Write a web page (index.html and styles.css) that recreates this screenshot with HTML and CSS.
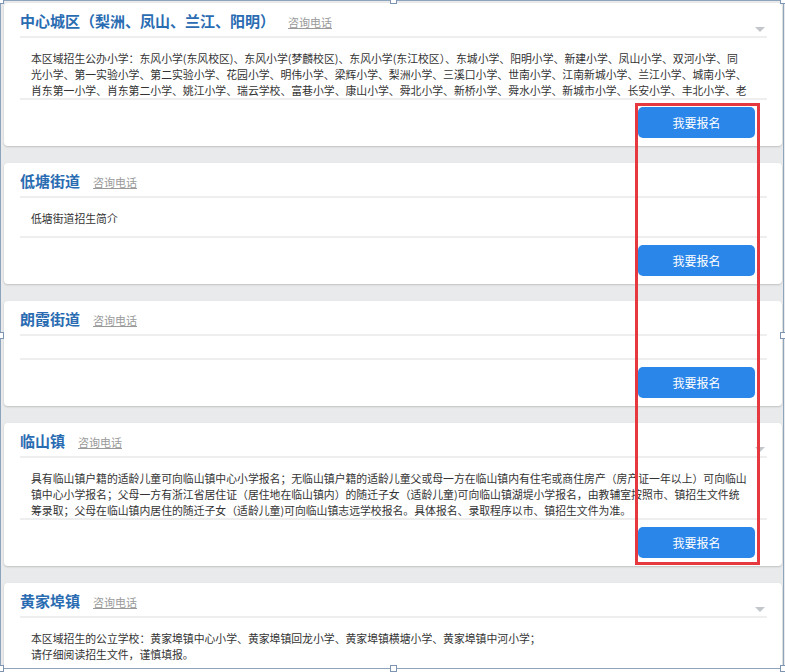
FILE: index.html
```html
<!DOCTYPE html>
<html lang="zh-CN">
<head>
<meta charset="utf-8">
<title>招生区域</title>
<link rel="stylesheet" href="styles.css">
</head>
<body>
<div class="page">
  <section class="card">
    <div class="card-head">
      <h2 class="title">中心城区（梨洲、凤山、兰江、阳明）</h2>
      <a class="phone" href="#">咨询电话</a>
      <span class="caret"></span>
    </div>
    <div class="card-body">本区域招生公办小学：东风小学(东风校区)、东风小学(梦麟校区)、东风小学(东江校区）、东城小学、阳明小学、新建小学、凤山小学、双河小学、同<br>光小学、第一实验小学、第二实验小学、花园小学、明伟小学、梁辉小学、梨洲小学、三溪口小学、世南小学、江南新城小学、兰江小学、城南小学、<br>肖东第一小学、肖东第二小学、姚江小学、瑞云学校、富巷小学、康山小学、舜北小学、新桥小学、舜水小学、新城市小学、长安小学、丰北小学、老</div>
    <div class="card-foot"><button class="btn">我要报名</button></div>
  </section>

  <section class="card">
    <div class="card-head">
      <h2 class="title">低塘街道</h2>
      <a class="phone" href="#">咨询电话</a>
    </div>
    <div class="card-body">低塘街道招生简介</div>
    <div class="card-foot"><button class="btn">我要报名</button></div>
  </section>

  <section class="card">
    <div class="card-head">
      <h2 class="title">朗霞街道</h2>
      <a class="phone" href="#">咨询电话</a>
    </div>
    <div class="card-body"></div>
    <div class="card-foot"><button class="btn">我要报名</button></div>
  </section>

  <section class="card">
    <div class="card-head">
      <h2 class="title">临山镇</h2>
      <a class="phone" href="#">咨询电话</a>
      <span class="caret"></span>
    </div>
    <div class="card-body">具有临山镇户籍的适龄儿童可向临山镇中心小学报名；无临山镇户籍的适龄儿童父或母一方在临山镇内有住宅或商住房产（房产证一年以上）可向临山<br>镇中心小学报名；父母一方有浙江省居住证（居住地在临山镇内）的随迁子女（适龄儿童)可向临山镇湖堤小学报名，由教辅室按照市、镇招生文件统<br>筹录取；父母在临山镇内居住的随迁子女（适龄儿童)可向临山镇志远学校报名。具体报名、录取程序以市、镇招生文件为准。</div>
    <div class="card-foot"><button class="btn">我要报名</button></div>
  </section>

  <section class="card">
    <div class="card-head">
      <h2 class="title">黄家埠镇</h2>
      <a class="phone" href="#">咨询电话</a>
      <span class="caret"></span>
    </div>
    <div class="card-body">本区域招生的公立学校：黄家埠镇中心小学、黄家埠镇回龙小学、黄家埠镇横塘小学、黄家埠镇中河小学；<br>请仔细阅读招生文件，谨慎填报。</div>
    <div class="card-foot"><button class="btn">我要报名</button></div>
  </section>
</div>

<div class="highlight"></div>

<div class="frame">
  <span class="handle h-tl"></span>
  <span class="handle h-tc"></span>
  <span class="handle h-tr"></span>
  <span class="handle h-ml"></span>
  <span class="handle h-mr"></span>
  <span class="handle h-bl"></span>
  <span class="handle h-bc"></span>
  <span class="handle h-br"></span>
</div>
</body>
</html>
```

FILE: styles.css
```css
html, body {
  margin: 0;
  height: 672px;
  overflow: hidden;
}

body {
  background: #e9eaeb;
  font-family: "Noto Sans CJK SC", "Noto Sans", sans-serif;
  color: #333;
}

.page {
  display: flex;
  flex-direction: column;
  gap: 17px;
  padding: 3px 3px 0 4px;
}

.card {
  background: #fff;
  border-radius: 4px;
  box-shadow: 0 1px 2px rgba(0, 0, 0, 0.18);
}

.card-head {
  display: flex;
  align-items: baseline;
  margin: 0 15px 0 16px;
  padding: 7px 2px 4px 0;
  border-bottom: 2px solid #eeeeee;
  height: 22px;
}

.title {
  margin: 0;
  font-size: 15px;
  line-height: 22px;
  font-weight: bold;
  color: #2a6cb2;
}

.phone {
  margin-left: 13px;
  font-size: 11px;
  color: #9a9a9a;
  text-decoration: underline;
}

.caret {
  margin-left: auto;
  align-self: flex-end;
  margin-bottom: 0;
  width: 0;
  height: 0;
  border-left: 5px solid transparent;
  border-right: 5px solid transparent;
  border-top: 5px solid #c3c6ca;
}

.card-body {
  box-sizing: border-box;
  margin: 0 15px 0 16px;
  padding: 12px 11px 10px;
  max-height: 62px;
  overflow: hidden;
  border-bottom: 2px solid #eeeeee;
  font-size: 10.85px;
  line-height: 16px;
  color: #333;
  white-space: nowrap;
}

.card-foot {
  display: flex;
  justify-content: flex-end;
  padding: 7px 27px 8px 0;
}

.btn {
  width: 117px;
  height: 31px;
  border: none;
  border-radius: 5px;
  background: #2b86ea;
  color: #fff;
  font-family: "Noto Sans CJK SC", sans-serif;
  font-size: 12px;
  padding: 0;
}

.highlight {
  position: absolute;
  left: 635px;
  top: 103px;
  width: 125px;
  height: 462px;
  box-sizing: border-box;
  border: 3px solid #e5393f;
}

.frame {
  position: absolute;
  left: 0;
  top: 0;
  width: 784px;
  height: 669px;
  box-sizing: border-box;
  border: 1px solid #8ea3bc;
  pointer-events: none;
}

.handle {
  position: absolute;
  width: 5px;
  height: 5px;
  background: #fff;
  border: 1px solid #7d95b2;
}

.h-tl { left: -4px; top: -4px; }
.h-tc { left: 389px; top: -4px; }
.h-tr { right: -4px; top: -4px; }
.h-ml { left: -4px; top: 331px; }
.h-mr { right: -4px; top: 331px; }
.h-bl { left: -4px; bottom: -4px; }
.h-bc { left: 389px; bottom: -4px; }
.h-br { right: -4px; bottom: -4px; }
```
